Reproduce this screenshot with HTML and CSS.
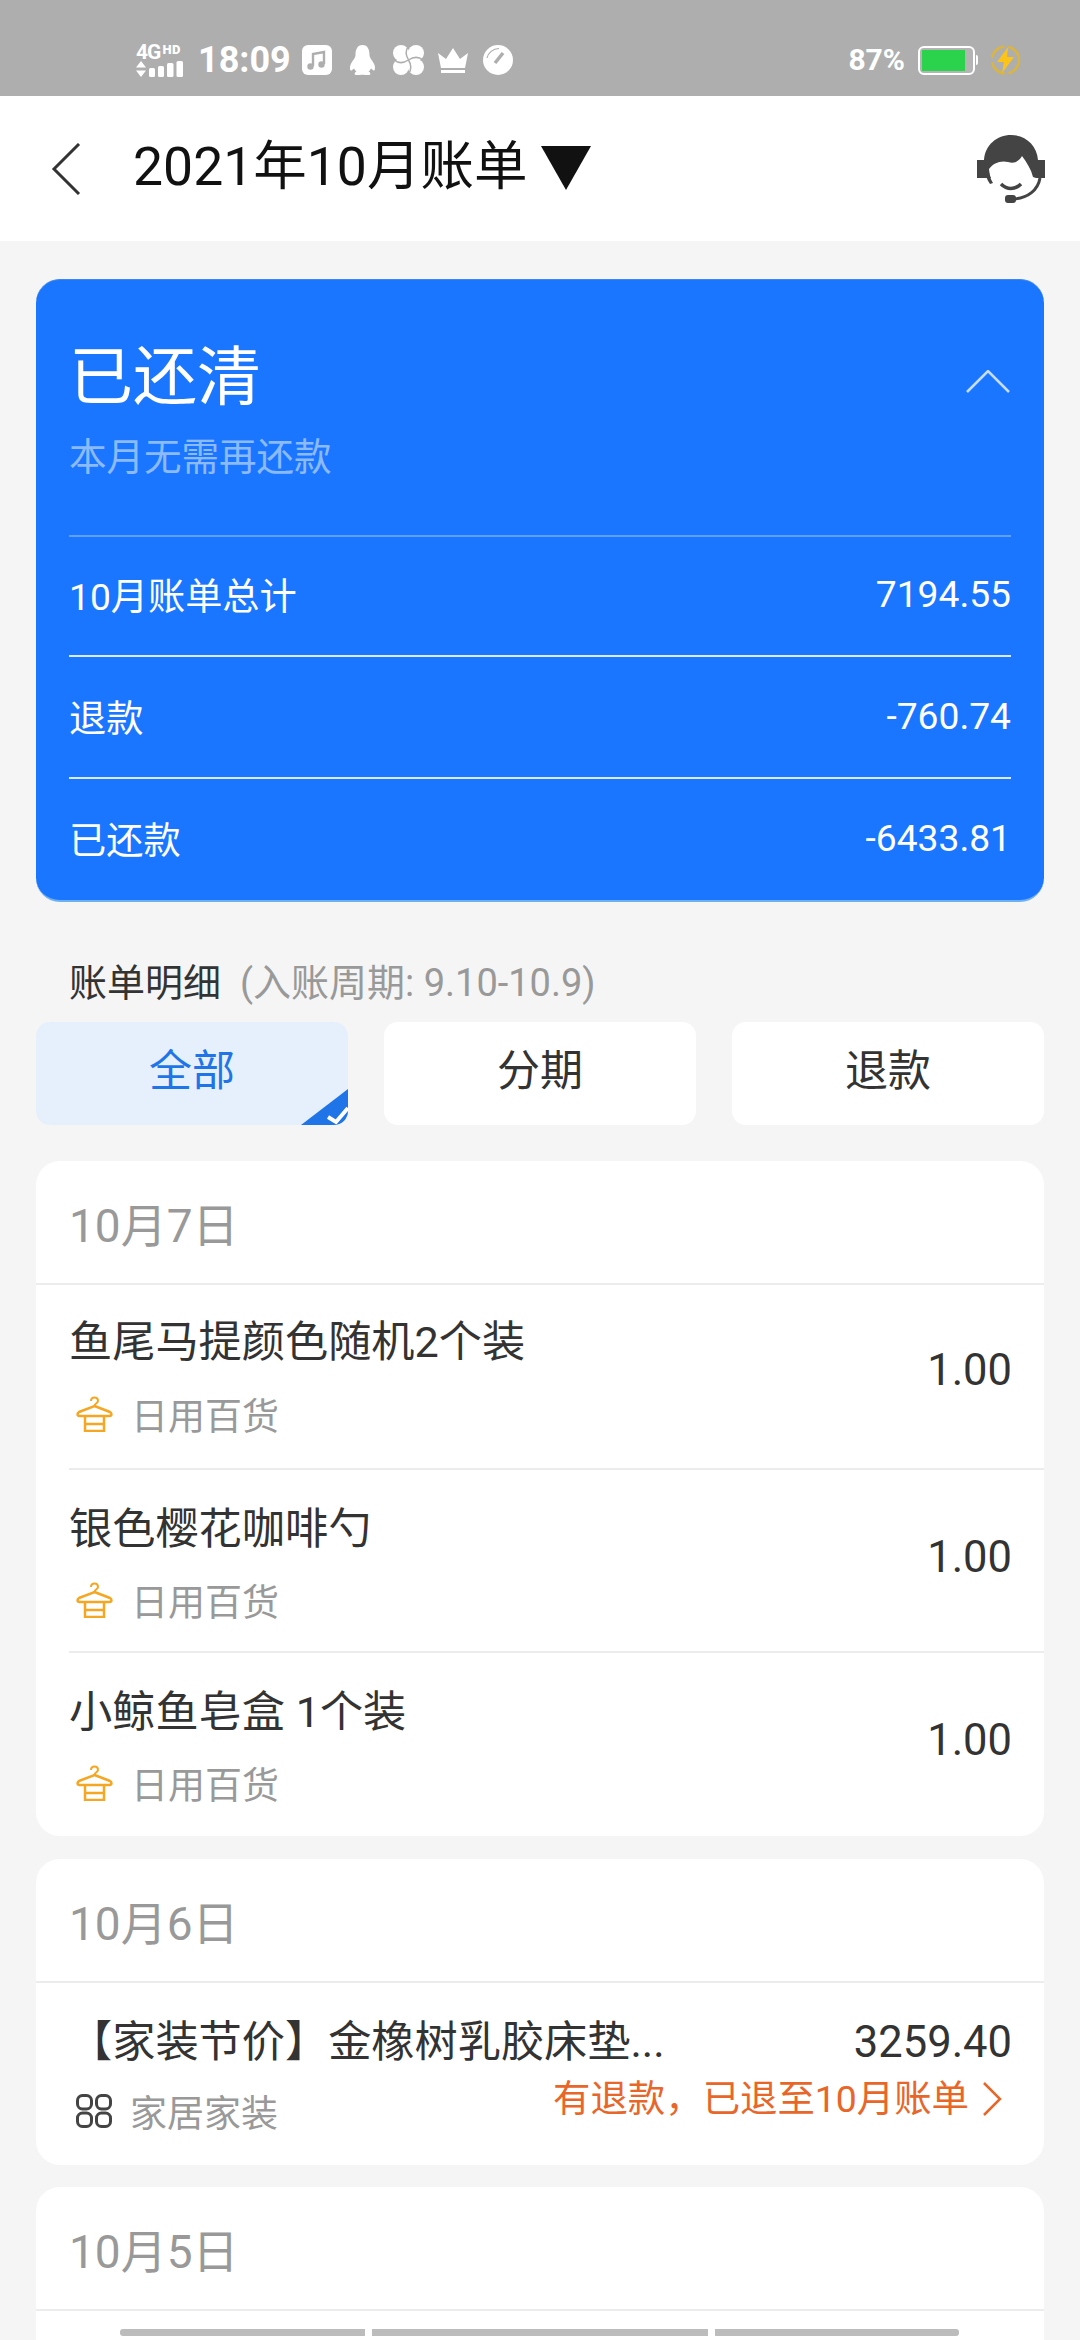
FILE: index.html
```html
<!DOCTYPE html>
<html lang="zh-CN">
<head>
<meta charset="utf-8">
<title>2021年10月账单</title>
<link rel="stylesheet" href="styles.css">
</head>
<body>
<div class="page">
  <div class="status">
    <div class="net">
      <div class="net-top"><span class="net-4g">4G</span><span class="net-hd">HD</span></div>
      <svg class="net-bars" width="47" height="16" viewBox="0 0 47 16"><path d="M5 0l5 6.500H0zM5 16l5-6.500H0z" fill="#fff"/><rect x="13" y="7" width="6" height="9" rx="1.500" fill="#fff"/><rect x="22" y="5" width="6" height="11" rx="1.500" fill="#fff"/><rect x="31" y="2" width="6.500" height="14" rx="1.500" fill="#fff"/><rect x="40.500" y="0" width="6.500" height="16" rx="1.500" fill="#fff"/></svg>
    </div>
    <span class="time">18:09</span>
    <svg class="st-ic" width="30" height="30" viewBox="0 0 30 30"><rect width="30" height="30" rx="6" fill="#fff"/><path d="M11 21V9l11-2v12" fill="none" stroke="#aeaeae" stroke-width="2.400"/><circle cx="8.500" cy="21.500" r="3.200" fill="#aeaeae"/><circle cx="19.500" cy="19.500" r="3.200" fill="#aeaeae"/></svg>
    <svg class="st-ic" width="27" height="30" viewBox="0 0 27 30"><path d="M13.500 0C8 0 6.500 5 6.500 10 6.500 13 3 16 1.500 20 .5 23 1 26 2.500 25.500L5 23.500C6 25 6.500 26 7.500 26.500 5.500 27.500 5 29 6.500 30H11C12.500 29.500 14.500 29.500 16 30H20.500C22 29 21.500 27.500 19.500 26.500 20.500 26 21 25 22 23.500L24.500 25.500C26 26 26.500 23 25.500 20 24 16 20.500 13 20.500 10 20.500 5 19 0 13.500 0Z" fill="#fff"/></svg>
    <svg class="st-ic fan" width="31" height="30" viewBox="0 0 31 30"><g fill="#fff"><circle cx="8" cy="8" r="8"/><circle cx="23" cy="8" r="8"/><circle cx="8" cy="22" r="8"/><circle cx="23" cy="22" r="8"/><rect x="6" y="6" width="19" height="18"/></g><path d="M15.500 1C12 6 13 11 15.500 15M30 15C25 11 20 12 15.500 15M15.500 29C19 24 18 19 15.500 15M1 15C6 19 11 18 15.500 15" fill="none" stroke="#aeaeae" stroke-width="1.500"/></svg>
    <svg class="st-ic crown" width="30" height="25" viewBox="0 0 30 25"><path d="M0 5l8 6 7-11 7 11 8-6-3 15H3z" fill="#fff"/><rect x="3" y="22" width="24" height="3" fill="#fff"/></svg>
    <svg class="st-ic" width="30" height="30" viewBox="0 0 30 30"><circle cx="15" cy="15" r="15" fill="#fff"/><path d="M12 18L20 8" stroke="#aeaeae" stroke-width="3.500"/><path d="M4 13C5 8 10 3.500 16 3.500" fill="none" stroke="#aeaeae" stroke-width="1.200"/></svg>
    <div class="st-right">
      <span class="pct">87%</span>
      <div class="battery"><div class="battery-fill"></div></div>
      <div class="battery-nub"></div>
      <svg class="bolt" width="31" height="32" viewBox="0 0 31 32"><circle cx="15.500" cy="16" r="13.500" fill="none" stroke="#e8b71a" stroke-width="2.500" stroke-dasharray="18 4" opacity=".75"/><path d="M18 3L7 18h7l-2 11 12-16h-7z" fill="#fcc419"/></svg>
    </div>
  </div>

  <header class="topbar">
    <svg class="back" width="30" height="52" viewBox="0 0 30 52"><path d="M28 1L3 26l25 25" fill="none" stroke="#333" stroke-width="3"/></svg>
    <h1 class="title">2021年10月账单</h1>
    <svg class="title-caret" width="50" height="44" viewBox="0 0 50 44"><path d="M0 0h50L25 44z" fill="#111"/></svg>
    <svg class="agent" width="68" height="69" viewBox="0 0 68 69">
      <path d="M7 25C8 10 20 0 34 0s26 10 27 25h7v18h-9l-3-1C54 34 50 28 45 21c-3 5-7 8-14 6-7-2-15 1-19 7 0 4 1 7 2 9h-5L0 43V25z" fill="#444"/>
      <path d="M12 34c0 5 1 9 4 14l-3 1c-3-4-5-9-5-15z" fill="#444"/>
      <path d="M24 49c6 6 14 6 20 0" fill="none" stroke="#444" stroke-width="3.500"/>
      <path d="M63 43c-2 12-12 20-26 21" fill="none" stroke="#444" stroke-width="3"/>
      <rect x="28" y="60" width="11" height="8" rx="3" fill="#444"/>
    </svg>
  </header>

  <main class="main">
    <section class="summary">
      <div class="summary-head">
        <div>
          <div class="summary-title">已还清</div>
          <div class="summary-sub">本月无需再还款</div>
        </div>
        <svg class="summary-toggle" width="44" height="23" viewBox="0 0 44 23"><path d="M1 22L22 1l21 21" fill="none" stroke="#fff" stroke-opacity=".75" stroke-width="2.500"/></svg>
      </div>
      <div class="sum-row sum-row-first"><span>10月账单总计</span><span class="sum-num">7194.55</span></div>
      <div class="sum-row"><span>退款</span><span class="sum-num">-760.74</span></div>
      <div class="sum-row"><span>已还款</span><span class="sum-num">-6433.81</span></div>
    </section>

    <div class="detail-title">账单明细<span class="detail-note">(入账周期: 9.10-10.9)</span></div>

    <div class="tabs">
      <div class="tab tab-active">全部
        <svg class="tab-mark" width="47" height="36" viewBox="0 0 47 36"><path d="M47 0v36H0z" fill="#1f74e8"/><path d="M27 28l8 5 12-14" fill="none" stroke="#fff" stroke-width="4"/></svg>
      </div>
      <div class="tab">分期</div>
      <div class="tab">退款</div>
    </div>

    <section class="card card-goods">
      <div class="date">10月7日</div>
      <div class="item">
        <div class="item-main">
          <div class="name">鱼尾马提颜色随机2个装</div>
          <div class="cat"><svg class="hanger" width="37" height="36" viewBox="0 0 37 36"><path d="M15 5c0-2 1.500-3.500 3.500-3.500S22 3 22 5s-3.500 2.500-3.500 5" fill="none" stroke="#f5a623" stroke-width="2"/><path d="M18.500 10L34 16c2 1 2 4-.5 4h-30C1 20 1 17 3 16z" fill="none" stroke="#f5a623" stroke-width="2.500"/><path d="M9 20v15h19V20M9 28h19" fill="none" stroke="#f5a623" stroke-width="2.500"/></svg><span>日用百货</span></div>
        </div>
        <div class="amount">1.00</div>
      </div>
      <div class="item item-ruled">
        <div class="item-main">
          <div class="name">银色樱花咖啡勺</div>
          <div class="cat"><svg class="hanger" width="37" height="36" viewBox="0 0 37 36"><path d="M15 5c0-2 1.500-3.500 3.500-3.500S22 3 22 5s-3.500 2.500-3.500 5" fill="none" stroke="#f5a623" stroke-width="2"/><path d="M18.500 10L34 16c2 1 2 4-.5 4h-30C1 20 1 17 3 16z" fill="none" stroke="#f5a623" stroke-width="2.500"/><path d="M9 20v15h19V20M9 28h19" fill="none" stroke="#f5a623" stroke-width="2.500"/></svg><span>日用百货</span></div>
        </div>
        <div class="amount">1.00</div>
      </div>
      <div class="item item-ruled">
        <div class="item-main">
          <div class="name">小鲸鱼皂盒 1个装</div>
          <div class="cat"><svg class="hanger" width="37" height="36" viewBox="0 0 37 36"><path d="M15 5c0-2 1.500-3.500 3.500-3.500S22 3 22 5s-3.500 2.500-3.500 5" fill="none" stroke="#f5a623" stroke-width="2"/><path d="M18.500 10L34 16c2 1 2 4-.5 4h-30C1 20 1 17 3 16z" fill="none" stroke="#f5a623" stroke-width="2.500"/><path d="M9 20v15h19V20M9 28h19" fill="none" stroke="#f5a623" stroke-width="2.500"/></svg><span>日用百货</span></div>
        </div>
        <div class="amount">1.00</div>
      </div>
    </section>

    <section class="card card-home">
      <div class="date">10月6日</div>
      <div class="refund-item">
        <div class="refund-line">
          <div class="name">【家装节价】金橡树乳胶床垫...</div>
          <div class="refund-amount">3259.40</div>
        </div>
        <div class="refund-line refund-line-b">
          <div class="cat cat-home"><svg class="grid-ic" width="36" height="34" viewBox="0 0 36 34"><g fill="none" stroke="#444" stroke-width="3"><rect x="1.500" y="1.500" width="14" height="13.500" rx="5"/><rect x="20.500" y="1.500" width="14" height="13.500" rx="5"/><rect x="1.500" y="19" width="14" height="13.500" rx="5"/><rect x="20.500" y="19" width="14" height="13.500" rx="5"/></g></svg><span>家居家装</span></div>
          <div class="refund">有退款，已退至10月账单<svg class="refund-arrow" width="20" height="34" viewBox="0 0 20 34"><path d="M2 1l16 16L2 33" fill="none" stroke="#e8662a" stroke-width="2.500"/></svg></div>
        </div>
      </div>
    </section>

    <section class="card card-last">
      <div class="date">10月5日</div>
      <div class="clipped">
        <div class="clipped-bar bar-a"></div>
        <div class="clipped-bar bar-b"></div>
        <div class="clipped-bar bar-c"></div>
      </div>
    </section>
  </main>
</div>
</body>
</html>
```

FILE: styles.css
```css
* { box-sizing: border-box; }
html, body { margin: 0; padding: 0; }
body {
  width: 1080px;
  height: 2340px;
  overflow: hidden;
  background: #f5f5f5;
  font-family: Roboto, "Noto Sans CJK SC", sans-serif;
  color: #333;
}
.page { display: flex; flex-direction: column; height: 2340px; overflow: hidden; }

.status {
  height: 96px;
  flex: none;
  background: #aeaeae;
  display: flex;
  align-items: center;
  padding: 24px 59px 0 136px;
  color: #fff;
}
.net { width: 47px; display: flex; flex-direction: column; gap: 1px; }
.net-top { display: flex; align-items: flex-start; height: 16px; line-height: 16px; white-space: nowrap; }
.net-4g { font-size: 21px; font-weight: 700; letter-spacing: -1px; }
.net-hd { font-size: 13px; font-weight: 900; line-height: 12px; letter-spacing: .5px; margin-left: 2px; }
.net-bars { display: block; }
.time { font-size: 36px; font-weight: 700; line-height: 40px; margin-left: 15px; width: 104px; }
.st-ic { display: block; flex: none; margin-right: 17px; }
.fan { margin-right: 14px; }
.crown { margin-right: 15px; }
.st-right { margin-left: auto; display: flex; align-items: center; }
.pct { font-size: 30px; font-weight: 700; line-height: 36px; margin-right: 13px; }
.battery {
  width: 57px;
  height: 29px;
  border: 2.500px solid #fff;
  border-radius: 6px;
  padding: 2px;
  background: #b4b4b4;
}
.battery-fill { width: 43px; height: 100%; background: #2bd24b; }
.battery-nub { width: 2px; height: 10px; background: #fff; margin-left: 1px; border-radius: 0 2px 2px 0; }
.bolt { margin-left: 12px; display: block; }

.topbar {
  height: 145px;
  flex: none;
  background: #fff;
  display: flex;
  align-items: center;
  padding: 0 35px 0 51px;
}
.back { flex: none; margin-top: 1px; }
.title {
  margin: 0 0 3px 52px;
  font-size: 53.500px;
  line-height: 64px;
  font-weight: 400;
  color: #111;
}
.title-caret { margin: 0 0 2px 14px; flex: none; }
.agent { margin-left: auto; margin-top: 1px; flex: none; }

.main { padding: 38px 36px 0; flex: 1; min-height: 0; }

.summary {
  background: #1a76ff;
  border-radius: 24px;
  height: 623px;
  padding: 0 33px;
  border-top: 1px solid #3f86e6;
  border-bottom: 2px solid #6fb0ee;
  color: #fff;
}
.summary-head {
  height: 255px;
  display: flex;
  justify-content: space-between;
  align-items: flex-start;
  padding-top: 53px;
}
.summary-title { font-size: 64px; line-height: 90px; font-weight: 400; }
.summary-sub { font-size: 37.500px; line-height: 50px; margin-top: 9px; color: rgba(255, 255, 255, .5); }
.summary-toggle { margin-top: 37px; margin-right: 1px; flex: none; }
.sum-row {
  height: 122px;
  padding-top: 4px;
  border-top: 2px solid rgba(255, 255, 255, .85);
  display: flex;
  justify-content: space-between;
  align-items: center;
  font-size: 37.200px;
  line-height: 50px;
}
.sum-row-first { border-top-color: rgba(255, 255, 255, .3); height: 120px; padding-top: 1px; }
.sum-num { margin-bottom: 6px; }

.detail-title {
  font-size: 38px;
  line-height: 50px;
  margin-top: 56px;
  padding-left: 33px;
  color: #333;
}
.detail-note { color: #999; margin-left: 19px; }

.tabs { display: grid; grid-template-columns: repeat(3, 312px); gap: 36px; margin-top: 14px; }
.tab {
  position: relative;
  overflow: hidden;
  height: 103px;
  border-radius: 14px;
  background: #fff;
  font-size: 43px;
  display: flex;
  align-items: center;
  justify-content: center;
  padding-bottom: 14px;
  color: #333;
}
.tab-active { background: #e6f0fd; color: #1f74e8; }
.tab-mark { position: absolute; right: 0; bottom: 0; display: block; }

.card { background: #fff; border-radius: 24px; }
.card-goods { margin-top: 36px; padding-bottom: 2px; }
.card-home { margin-top: 23px; }
.card-last { margin-top: 22px; min-height: 300px; }
.date {
  height: 124px;
  padding: 8px 33px 0;
  border-bottom: 2px solid #ececec;
  font-size: 46px;
  line-height: 114px;
  color: #999;
}

.item {
  margin-left: 33px;
  padding-right: 32px;
  height: 183px;
  display: flex;
  justify-content: space-between;
  align-items: flex-start;
}
.item-ruled { border-top: 2px solid #ececec; }
.item-main { min-width: 0; padding-top: 33px; }
.item-ruled .item-main { padding-top: 35px; }
.name { font-size: 43.200px; line-height: 50px; color: #333; white-space: nowrap; }
.cat { display: flex; align-items: center; margin-top: 26px; height: 40px; font-size: 37px; color: #999; padding-left: 7px; }
.item-ruled .cat { margin-top: 25px; }
.hanger, .grid-ic { flex: none; display: block; }
.cat span { margin-left: 18px; }
.amount { font-size: 43.500px; line-height: 50px; color: #333; margin-top: 61px; }
.item-ruled .amount { margin-top: 63px; }

.refund-item { height: 182px; margin-left: 33px; padding: 35px 32px 0 0; }
.refund-line { display: flex; justify-content: space-between; align-items: flex-start; }
.refund-line-b { margin-top: 6px; }
.refund-amount { font-size: 43.500px; line-height: 50px; color: #333; }
.cat-home { margin-top: 17px; }
.refund { display: flex; align-items: center; font-size: 37.400px; line-height: 50px; color: #e8662a; margin-right: 10px; white-space: nowrap; }
.refund-arrow { margin-left: 13px; display: block; flex: none; }

.clipped { display: flex; gap: 7px; padding: 18px 0 0 84px; }
.clipped-bar { height: 7px; background: #bcbcbc; }
.bar-a { width: 245px; border-radius: 3px 0 0 3px; }
.bar-b { width: 336px; }
.bar-c { width: 244px; border-radius: 0 3px 3px 0; }
```
